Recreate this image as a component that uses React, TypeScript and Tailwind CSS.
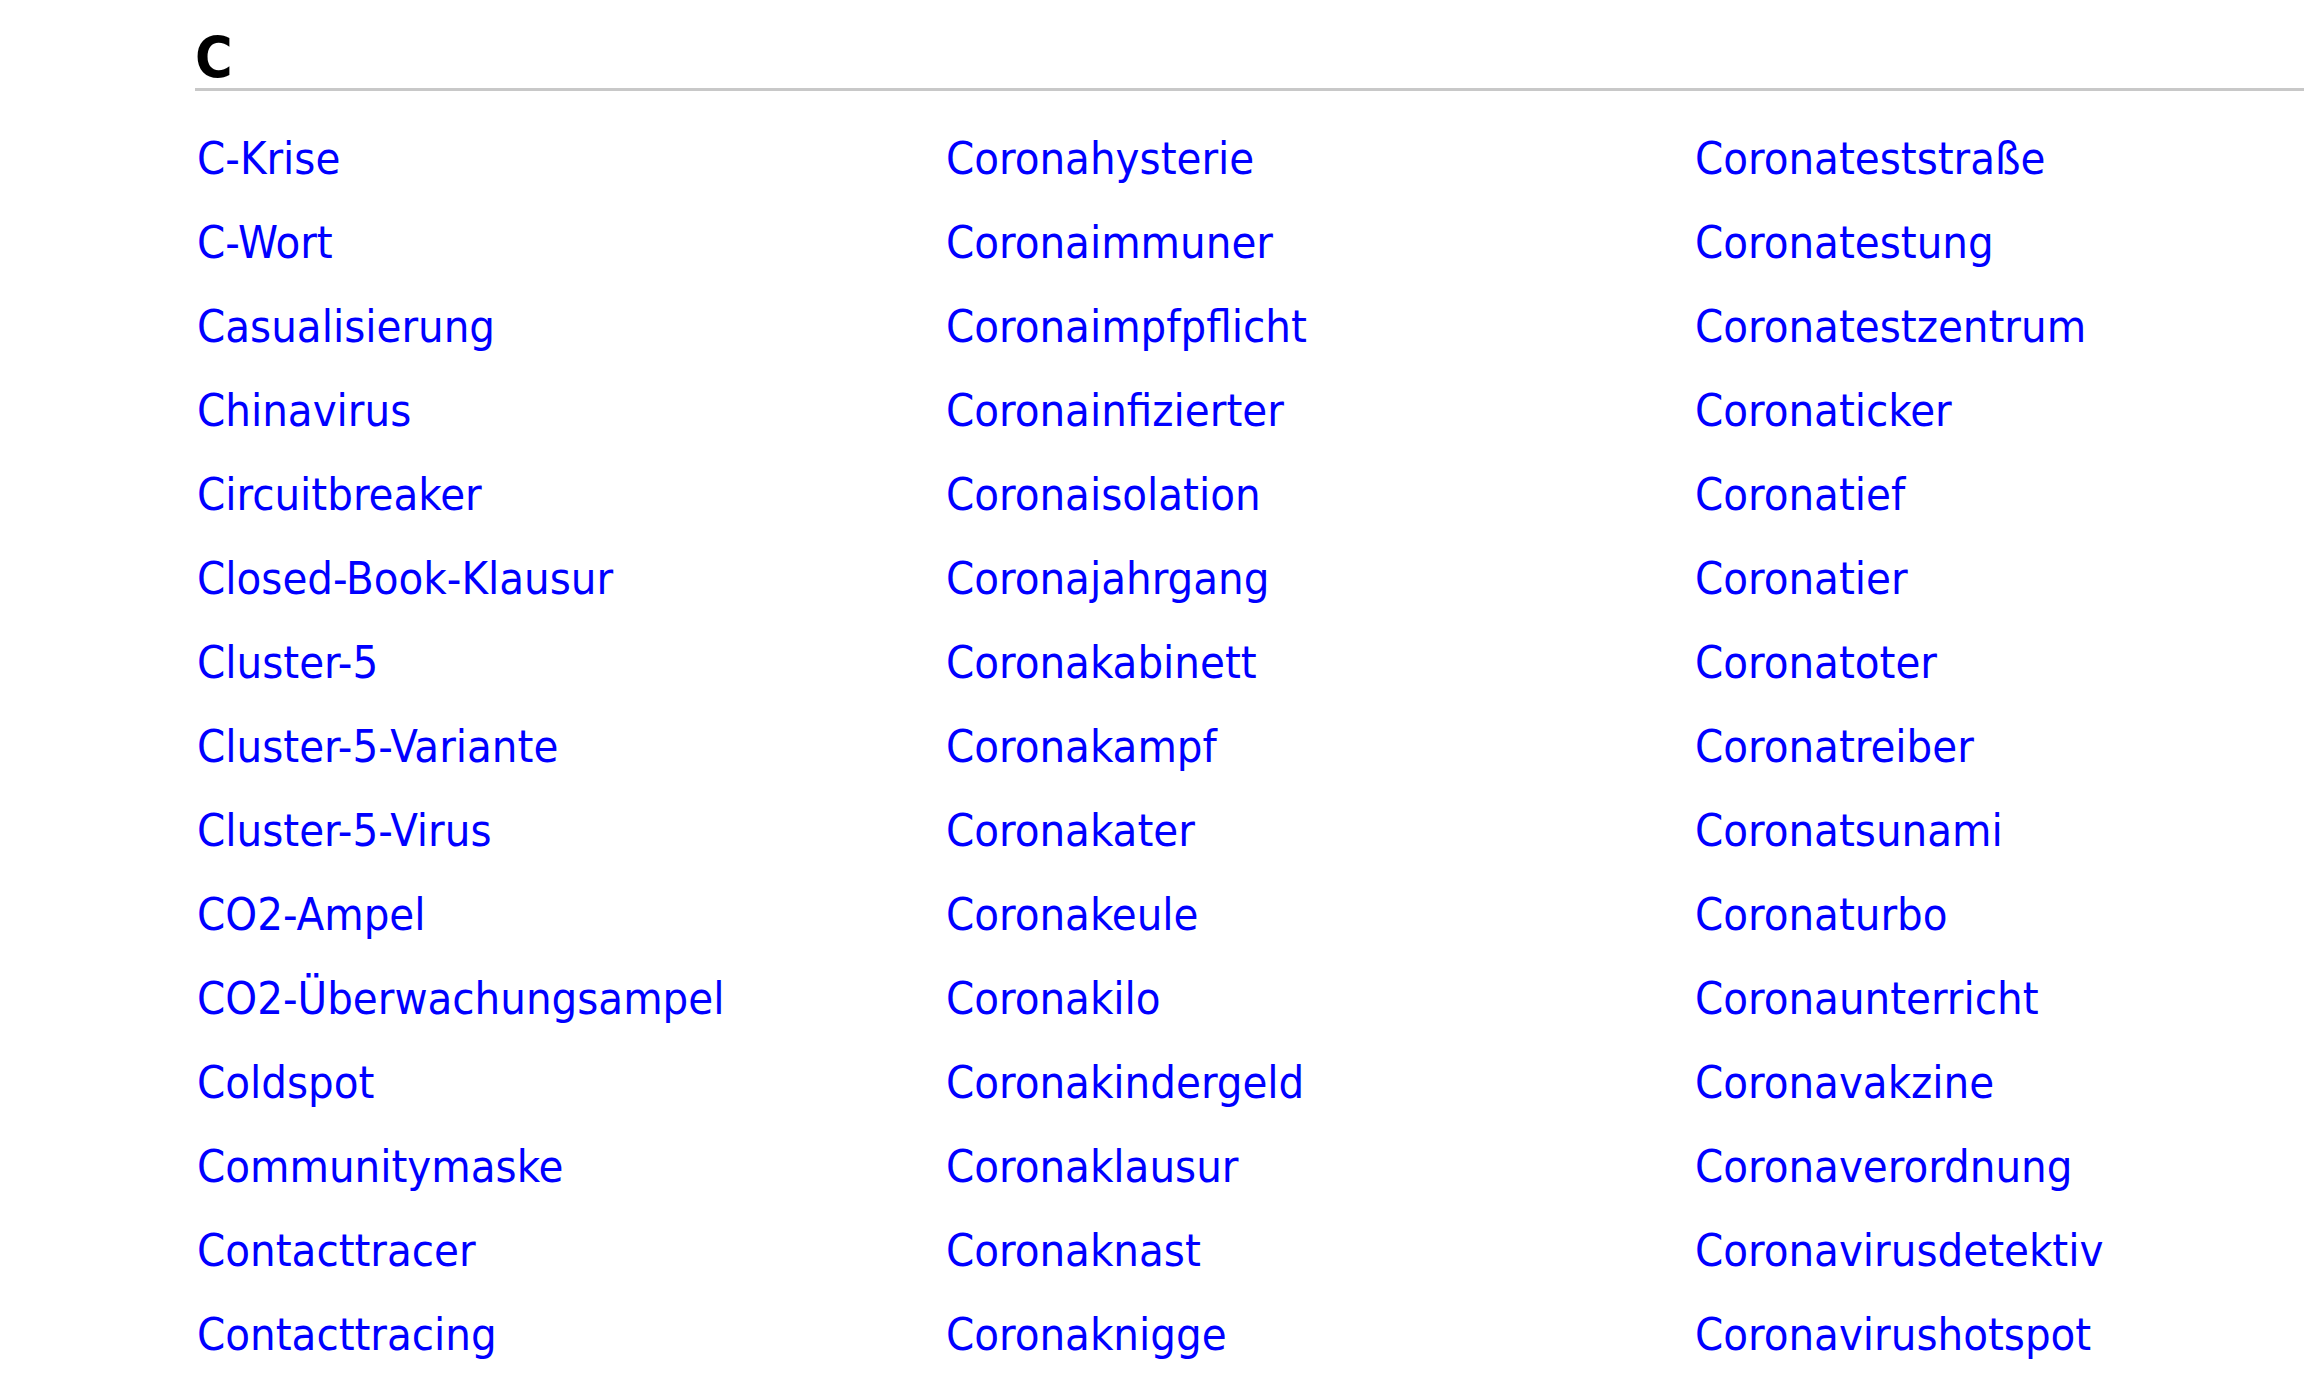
import React from "react";

const col1 = [
  "C-Krise",
  "C-Wort",
  "Casualisierung",
  "Chinavirus",
  "Circuitbreaker",
  "Closed-Book-Klausur",
  "Cluster-5",
  "Cluster-5-Variante",
  "Cluster-5-Virus",
  "CO2-Ampel",
  "CO2-Überwachungsampel",
  "Coldspot",
  "Communitymaske",
  "Contacttracer",
  "Contacttracing",
];

const col2 = [
  "Coronahysterie",
  "Coronaimmuner",
  "Coronaimpfpflicht",
  "Coronainfizierter",
  "Coronaisolation",
  "Coronajahrgang",
  "Coronakabinett",
  "Coronakampf",
  "Coronakater",
  "Coronakeule",
  "Coronakilo",
  "Coronakindergeld",
  "Coronaklausur",
  "Coronaknast",
  "Coronaknigge",
];

const col3 = [
  "Coronateststraße",
  "Coronatestung",
  "Coronatestzentrum",
  "Coronaticker",
  "Coronatief",
  "Coronatier",
  "Coronatoter",
  "Coronatreiber",
  "Coronatsunami",
  "Coronaturbo",
  "Coronaunterricht",
  "Coronavakzine",
  "Coronaverordnung",
  "Coronavirusdetektiv",
  "Coronavirushotspot",
];

function WordColumn({ words }: { words: string[] }) {
  return (
    <ul className="flex flex-col">
      {words.map((w) => (
        <li key={w} className="h-[84px] leading-[84px] whitespace-nowrap">
          <a href="#" className="text-[#0000ff] pl-[2px]">
            {w}
          </a>
        </li>
      ))}
    </ul>
  );
}

export default function App() {
  return (
    <div
      className="min-h-screen bg-white overflow-hidden"
      style={{ fontFamily: '"DejaVu Sans Condensed", "DejaVu Sans", Verdana, sans-serif' }}
    >
      <div className="ml-[195px]">
        {/* letter heading */}
        <h2 className="pt-[30px] pb-[1px] text-[57px] leading-none font-bold text-black border-b-[3px] border-[#c8c8c8]">
          C
        </h2>

        {/* word list, three columns */}
        <div className="mt-[26px] grid grid-cols-[749px_749px_1fr] text-[45px]">
          <WordColumn words={col1} />
          <WordColumn words={col2} />
          <WordColumn words={col3} />
        </div>
      </div>
    </div>
  );
}
